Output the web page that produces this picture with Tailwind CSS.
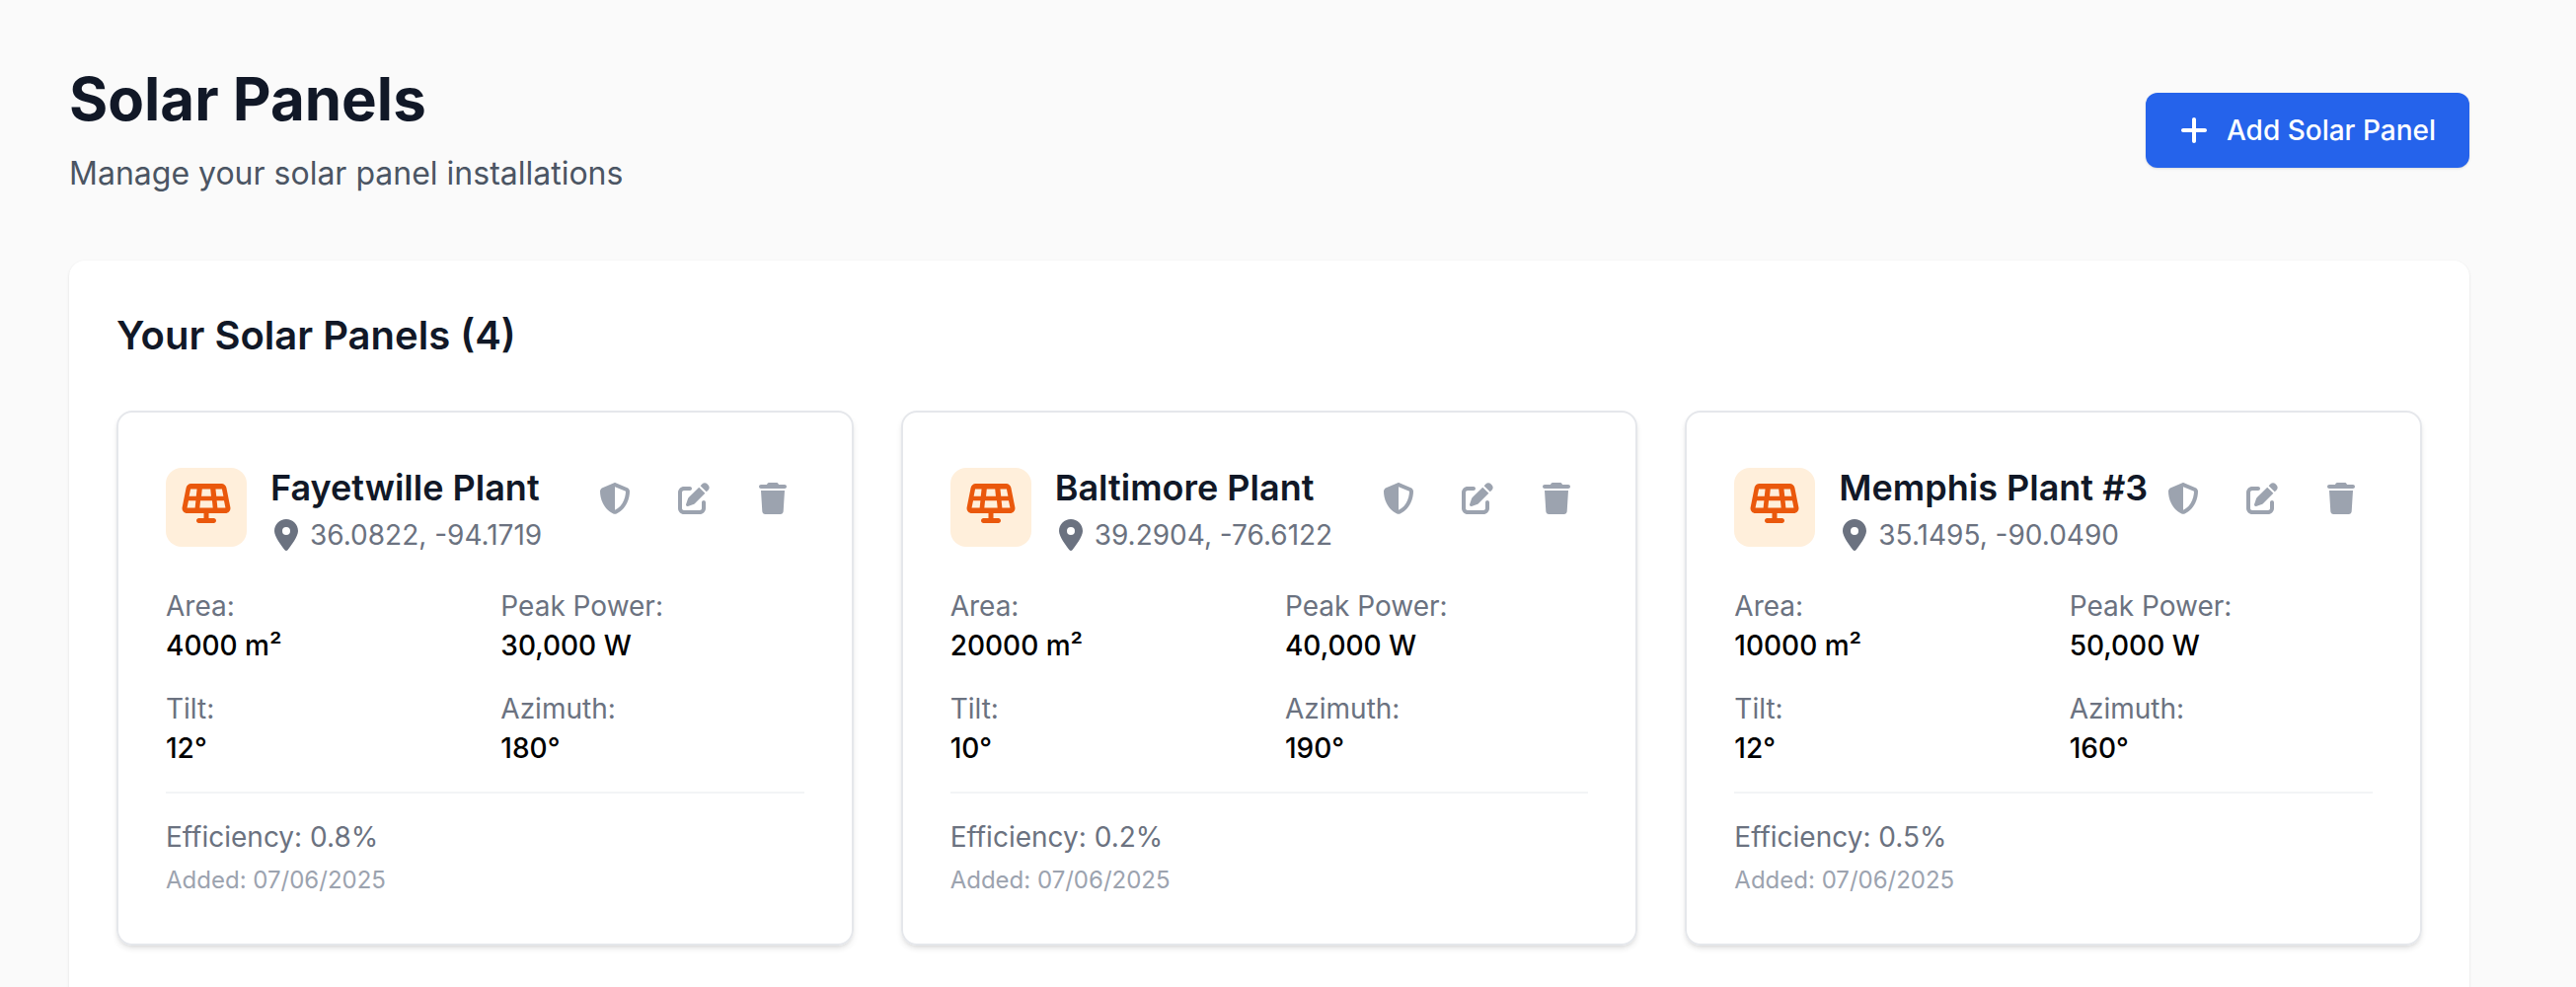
<!DOCTYPE html>
<html lang="en">
<head>
<meta charset="UTF-8">
<title>Solar Panels</title>
<script src="https://cdn.jsdelivr.net/npm/@tailwindcss/browser@4"></script>
</head>
<body class="h-[1000px] overflow-hidden bg-[#fafafa] font-['Inter',sans-serif]">
<div class="w-[2432px] ml-[70px] pt-[64px]">
    <div class="flex items-center justify-between mb-[64px]">
        <div>
            <h1 class="text-[60px] leading-[72px] font-bold text-[#111827]">Solar Panels</h1>
            <p class="mt-[16px] text-[32px] leading-[48px] text-[#4b5563]">Manage your solar panel installations</p>
        </div>
        <button class="flex items-center gap-[19px] h-[76px] pl-[35px] pr-[34px] rounded-[12px] bg-[#2563eb] text-white text-[28px] leading-[40px] font-medium shadow-sm">
            <svg class="w-[28px] h-[32px]" viewBox="0 0 448 512" fill="currentColor"><path d="M256 80c0-17.7-14.3-32-32-32s-32 14.3-32 32V224H48c-17.7 0-32 14.3-32 32s14.3 32 32 32H192V432c0 17.7 14.3 32 32 32s32-14.3 32-32V288H400c17.7 0 32-14.3 32-32s-14.3-32-32-32H256V80z"/></svg>
            Add Solar Panel
        </button>
    </div>

    <div class="bg-white rounded-[16px] p-[48px] h-[800px] shadow-sm">
        <h2 class="text-[40px] leading-[56px] font-semibold text-[#111827] mb-[48px]">Your Solar Panels (4)</h2>
        <div class="grid grid-cols-3 gap-[48px]">

            <!-- Fayetwille -->
            <div class="border-2 border-[#e5e7eb] rounded-[16px] p-[48px] shadow-md">
                <div class="flex items-start justify-between mb-[32px]">
                    <div class="flex items-center gap-[24px]">
                        <div class="w-[82px] h-[80px] pb-[8px] flex items-center justify-center rounded-[16px] bg-[#ffefdb] text-[#ea580c]">
                            <svg class="w-[50px] h-[40px]" viewBox="0 0 640 512" fill="currentColor"><path d="M122.2 0C91.7 0 65.5 21.5 59.5 51.4L8.3 307.4C.4 347 30.6 384 71 384H288v64H224c-17.7 0-32 14.3-32 32s14.3 32 32 32H416c17.7 0 32-14.3 32-32s-14.3-32-32-32H352V384H569c40.4 0 70.7-36.9 62.8-76.6l-51.2-256C574.5 21.5 548.3 0 517.8 0H122.2zM266 70H374l9.5 94H256.5L266 70zM189 164H97.5L116 70H199L189 164zM90 220H184L174.5 314H71l19-94zM244 220H396l9.5 94H234.5l9.5-94zM456 220H550l19 94H465.5L456 220zM451 164L441 70h83l18.5 94H451z"/></svg>
                        </div>
                        <div>
                            <h3 class="text-[36px] leading-[56px] font-semibold text-[#111827]">Fayetwille Plant</h3>
                            <div class="flex items-center gap-[12px] ml-[4px] text-[28px] leading-[40px] text-[#6b7280]">
                                <svg class="w-[24px] h-[32px]" viewBox="0 0 384 512" fill="currentColor"><path d="M215.7 499.2C267 435 384 279.4 384 192C384 86 298 0 192 0S0 86 0 192c0 87.4 117 243 168.3 307.2c12.3 15.3 35.1 15.3 47.4 0zM192 128a64 64 0 1 1 0 128 64 64 0 1 1 0-128z"/></svg>
                                36.0822, -94.1719
                            </div>
                        </div>
                    </div>
                    <div class="flex gap-[16px] mt-[7px] text-[#9ca3af]">
                        <button class="p-[16px]"><svg class="w-[32px] h-[32px]" viewBox="0 0 512 512" fill="currentColor"><path d="M256 0c4.6 0 9.2 1 13.4 2.9L457.7 82.8c22 9.3 38.4 31 38.3 57.2c-.5 99.2-41.3 280.7-213.6 363.2c-16.7 8-36.1 8-52.8 0C57.3 420.7 16.5 239.2 16 140c-.1-26.2 16.3-47.9 38.3-57.2L242.7 2.9C246.8 1 251.4 0 256 0zm0 66.8V444.8C394 378 431.1 230.1 432 141.4L256 66.8z"/></svg></button>
                        <button class="p-[16px]"><svg class="w-[32px] h-[32px]" viewBox="0 0 512 512" fill="currentColor"><path d="M471.6 21.7c-21.9-21.9-57.3-21.9-79.2 0L362.3 51.7l97.9 97.9 30.1-30.1c21.9-21.9 21.9-57.3 0-79.2L471.6 21.7zm-299.2 220c-6.1 6.1-10.8 13.6-13.5 21.9l-29.6 88.8c-2.9 8.6-.6 18.1 5.8 24.6s15.9 8.7 24.6 5.8l88.8-29.6c8.2-2.7 15.7-7.4 21.9-13.5L437.7 172.3 339.7 74.3 172.4 241.7zM96 64C43 64 0 107 0 160V416c0 53 43 96 96 96H352c53 0 96-43 96-96V320c0-17.7-14.3-32-32-32s-32 14.3-32 32v96c0 17.7-14.3 32-32 32H96c-17.7 0-32-14.3-32-32V160c0-17.7 14.3-32 32-32h96c17.7 0 32-14.3 32-32s-14.3-32-32-32H96z"/></svg></button>
                        <button class="py-[16px] px-[18px]"><svg class="w-[28px] h-[32px]" viewBox="0 0 448 512" fill="currentColor"><path d="M135.2 17.7L128 32H32C14.3 32 0 46.3 0 64S14.3 96 32 96H416c17.7 0 32-14.3 32-32s-14.3-32-32-32H320l-7.2-14.3C307.4 6.8 296.3 0 284.2 0H163.8c-12.1 0-23.2 6.8-28.6 17.7zM416 128H32L53.2 467c1.6 25.3 22.6 45 47.9 45H346.9c25.3 0 46.3-19.7 47.9-45L416 128z"/></svg></button>
                    </div>
                </div>
                <div class="grid grid-cols-2 gap-x-[32px] gap-y-[24px] text-[28px] leading-[40px]">
                    <div><p class="text-[#6b7280]">Area:</p><p class="font-medium text-black">4000 m²</p></div>
                    <div><p class="text-[#6b7280]">Peak Power:</p><p class="font-medium text-black">30,000 W</p></div>
                    <div><p class="text-[#6b7280]">Tilt:</p><p class="font-medium text-black">12°</p></div>
                    <div><p class="text-[#6b7280]">Azimuth:</p><p class="font-medium text-black">180°</p></div>
                </div>
                <div class="mt-[24px] pt-[24px] border-t-2 border-[#f3f4f6]">
                    <p class="text-[28px] leading-[40px] text-[#6b7280]">Efficiency: 0.8%</p>
                    <p class="mt-[8px] text-[24px] leading-[32px] text-[#9ca3af]">Added: 07/06/2025</p>
                </div>
            </div>

            <!-- Baltimore -->
            <div class="border-2 border-[#e5e7eb] rounded-[16px] p-[48px] shadow-md">
                <div class="flex items-start justify-between mb-[32px]">
                    <div class="flex items-center gap-[24px]">
                        <div class="w-[82px] h-[80px] pb-[8px] flex items-center justify-center rounded-[16px] bg-[#ffefdb] text-[#ea580c]">
                            <svg class="w-[50px] h-[40px]" viewBox="0 0 640 512" fill="currentColor"><path d="M122.2 0C91.7 0 65.5 21.5 59.5 51.4L8.3 307.4C.4 347 30.6 384 71 384H288v64H224c-17.7 0-32 14.3-32 32s14.3 32 32 32H416c17.7 0 32-14.3 32-32s-14.3-32-32-32H352V384H569c40.4 0 70.7-36.9 62.8-76.6l-51.2-256C574.5 21.5 548.3 0 517.8 0H122.2zM266 70H374l9.5 94H256.5L266 70zM189 164H97.5L116 70H199L189 164zM90 220H184L174.5 314H71l19-94zM244 220H396l9.5 94H234.5l9.5-94zM456 220H550l19 94H465.5L456 220zM451 164L441 70h83l18.5 94H451z"/></svg>
                        </div>
                        <div>
                            <h3 class="text-[36px] leading-[56px] font-semibold text-[#111827]">Baltimore Plant</h3>
                            <div class="flex items-center gap-[12px] ml-[4px] text-[28px] leading-[40px] text-[#6b7280]">
                                <svg class="w-[24px] h-[32px]" viewBox="0 0 384 512" fill="currentColor"><path d="M215.7 499.2C267 435 384 279.4 384 192C384 86 298 0 192 0S0 86 0 192c0 87.4 117 243 168.3 307.2c12.3 15.3 35.1 15.3 47.4 0zM192 128a64 64 0 1 1 0 128 64 64 0 1 1 0-128z"/></svg>
                                39.2904, -76.6122
                            </div>
                        </div>
                    </div>
                    <div class="flex gap-[16px] mt-[7px] text-[#9ca3af]">
                        <button class="p-[16px]"><svg class="w-[32px] h-[32px]" viewBox="0 0 512 512" fill="currentColor"><path d="M256 0c4.6 0 9.2 1 13.4 2.9L457.7 82.8c22 9.3 38.4 31 38.3 57.2c-.5 99.2-41.3 280.7-213.6 363.2c-16.7 8-36.1 8-52.8 0C57.3 420.7 16.5 239.2 16 140c-.1-26.2 16.3-47.9 38.3-57.2L242.7 2.9C246.8 1 251.4 0 256 0zm0 66.8V444.8C394 378 431.1 230.1 432 141.4L256 66.8z"/></svg></button>
                        <button class="p-[16px]"><svg class="w-[32px] h-[32px]" viewBox="0 0 512 512" fill="currentColor"><path d="M471.6 21.7c-21.9-21.9-57.3-21.9-79.2 0L362.3 51.7l97.9 97.9 30.1-30.1c21.9-21.9 21.9-57.3 0-79.2L471.6 21.7zm-299.2 220c-6.1 6.1-10.8 13.6-13.5 21.9l-29.6 88.8c-2.9 8.6-.6 18.1 5.8 24.6s15.9 8.7 24.6 5.8l88.8-29.6c8.2-2.7 15.7-7.4 21.9-13.5L437.7 172.3 339.7 74.3 172.4 241.7zM96 64C43 64 0 107 0 160V416c0 53 43 96 96 96H352c53 0 96-43 96-96V320c0-17.7-14.3-32-32-32s-32 14.3-32 32v96c0 17.7-14.3 32-32 32H96c-17.7 0-32-14.3-32-32V160c0-17.7 14.3-32 32-32h96c17.7 0 32-14.3 32-32s-14.3-32-32-32H96z"/></svg></button>
                        <button class="py-[16px] px-[18px]"><svg class="w-[28px] h-[32px]" viewBox="0 0 448 512" fill="currentColor"><path d="M135.2 17.7L128 32H32C14.3 32 0 46.3 0 64S14.3 96 32 96H416c17.7 0 32-14.3 32-32s-14.3-32-32-32H320l-7.2-14.3C307.4 6.8 296.3 0 284.2 0H163.8c-12.1 0-23.2 6.8-28.6 17.7zM416 128H32L53.2 467c1.6 25.3 22.6 45 47.9 45H346.9c25.3 0 46.3-19.7 47.9-45L416 128z"/></svg></button>
                    </div>
                </div>
                <div class="grid grid-cols-2 gap-x-[32px] gap-y-[24px] text-[28px] leading-[40px]">
                    <div><p class="text-[#6b7280]">Area:</p><p class="font-medium text-black">20000 m²</p></div>
                    <div><p class="text-[#6b7280]">Peak Power:</p><p class="font-medium text-black">40,000 W</p></div>
                    <div><p class="text-[#6b7280]">Tilt:</p><p class="font-medium text-black">10°</p></div>
                    <div><p class="text-[#6b7280]">Azimuth:</p><p class="font-medium text-black">190°</p></div>
                </div>
                <div class="mt-[24px] pt-[24px] border-t-2 border-[#f3f4f6]">
                    <p class="text-[28px] leading-[40px] text-[#6b7280]">Efficiency: 0.2%</p>
                    <p class="mt-[8px] text-[24px] leading-[32px] text-[#9ca3af]">Added: 07/06/2025</p>
                </div>
            </div>

            <!-- Memphis -->
            <div class="border-2 border-[#e5e7eb] rounded-[16px] p-[48px] shadow-md">
                <div class="flex items-start justify-between mb-[32px]">
                    <div class="flex items-center gap-[24px]">
                        <div class="w-[82px] h-[80px] pb-[8px] flex items-center justify-center rounded-[16px] bg-[#ffefdb] text-[#ea580c]">
                            <svg class="w-[50px] h-[40px]" viewBox="0 0 640 512" fill="currentColor"><path d="M122.2 0C91.7 0 65.5 21.5 59.5 51.4L8.3 307.4C.4 347 30.6 384 71 384H288v64H224c-17.7 0-32 14.3-32 32s14.3 32 32 32H416c17.7 0 32-14.3 32-32s-14.3-32-32-32H352V384H569c40.4 0 70.7-36.9 62.8-76.6l-51.2-256C574.5 21.5 548.3 0 517.8 0H122.2zM266 70H374l9.5 94H256.5L266 70zM189 164H97.5L116 70H199L189 164zM90 220H184L174.5 314H71l19-94zM244 220H396l9.5 94H234.5l9.5-94zM456 220H550l19 94H465.5L456 220zM451 164L441 70h83l18.5 94H451z"/></svg>
                        </div>
                        <div>
                            <h3 class="text-[36px] leading-[56px] font-semibold text-[#111827]">Memphis Plant #3</h3>
                            <div class="flex items-center gap-[12px] ml-[4px] text-[28px] leading-[40px] text-[#6b7280]">
                                <svg class="w-[24px] h-[32px]" viewBox="0 0 384 512" fill="currentColor"><path d="M215.7 499.2C267 435 384 279.4 384 192C384 86 298 0 192 0S0 86 0 192c0 87.4 117 243 168.3 307.2c12.3 15.3 35.1 15.3 47.4 0zM192 128a64 64 0 1 1 0 128 64 64 0 1 1 0-128z"/></svg>
                                35.1495, -90.0490
                            </div>
                        </div>
                    </div>
                    <div class="flex gap-[16px] mt-[7px] text-[#9ca3af]">
                        <button class="p-[16px]"><svg class="w-[32px] h-[32px]" viewBox="0 0 512 512" fill="currentColor"><path d="M256 0c4.6 0 9.2 1 13.4 2.9L457.7 82.8c22 9.3 38.4 31 38.3 57.2c-.5 99.2-41.3 280.7-213.6 363.2c-16.7 8-36.1 8-52.8 0C57.3 420.7 16.5 239.2 16 140c-.1-26.2 16.3-47.9 38.3-57.2L242.7 2.9C246.8 1 251.4 0 256 0zm0 66.8V444.8C394 378 431.1 230.1 432 141.4L256 66.8z"/></svg></button>
                        <button class="p-[16px]"><svg class="w-[32px] h-[32px]" viewBox="0 0 512 512" fill="currentColor"><path d="M471.6 21.7c-21.9-21.9-57.3-21.9-79.2 0L362.3 51.7l97.9 97.9 30.1-30.1c21.9-21.9 21.9-57.3 0-79.2L471.6 21.7zm-299.2 220c-6.1 6.1-10.8 13.6-13.5 21.9l-29.6 88.8c-2.9 8.6-.6 18.1 5.8 24.6s15.9 8.7 24.6 5.8l88.8-29.6c8.2-2.7 15.7-7.4 21.9-13.5L437.7 172.3 339.7 74.3 172.4 241.7zM96 64C43 64 0 107 0 160V416c0 53 43 96 96 96H352c53 0 96-43 96-96V320c0-17.7-14.3-32-32-32s-32 14.3-32 32v96c0 17.7-14.3 32-32 32H96c-17.7 0-32-14.3-32-32V160c0-17.7 14.3-32 32-32h96c17.7 0 32-14.3 32-32s-14.3-32-32-32H96z"/></svg></button>
                        <button class="py-[16px] px-[18px]"><svg class="w-[28px] h-[32px]" viewBox="0 0 448 512" fill="currentColor"><path d="M135.2 17.7L128 32H32C14.3 32 0 46.3 0 64S14.3 96 32 96H416c17.7 0 32-14.3 32-32s-14.3-32-32-32H320l-7.2-14.3C307.4 6.8 296.3 0 284.2 0H163.8c-12.1 0-23.2 6.8-28.6 17.7zM416 128H32L53.2 467c1.6 25.3 22.6 45 47.9 45H346.9c25.3 0 46.3-19.7 47.9-45L416 128z"/></svg></button>
                    </div>
                </div>
                <div class="grid grid-cols-2 gap-x-[32px] gap-y-[24px] text-[28px] leading-[40px]">
                    <div><p class="text-[#6b7280]">Area:</p><p class="font-medium text-black">10000 m²</p></div>
                    <div><p class="text-[#6b7280]">Peak Power:</p><p class="font-medium text-black">50,000 W</p></div>
                    <div><p class="text-[#6b7280]">Tilt:</p><p class="font-medium text-black">12°</p></div>
                    <div><p class="text-[#6b7280]">Azimuth:</p><p class="font-medium text-black">160°</p></div>
                </div>
                <div class="mt-[24px] pt-[24px] border-t-2 border-[#f3f4f6]">
                    <p class="text-[28px] leading-[40px] text-[#6b7280]">Efficiency: 0.5%</p>
                    <p class="mt-[8px] text-[24px] leading-[32px] text-[#9ca3af]">Added: 07/06/2025</p>
                </div>
            </div>

        </div>
    </div>
</div>
</body>
</html>
